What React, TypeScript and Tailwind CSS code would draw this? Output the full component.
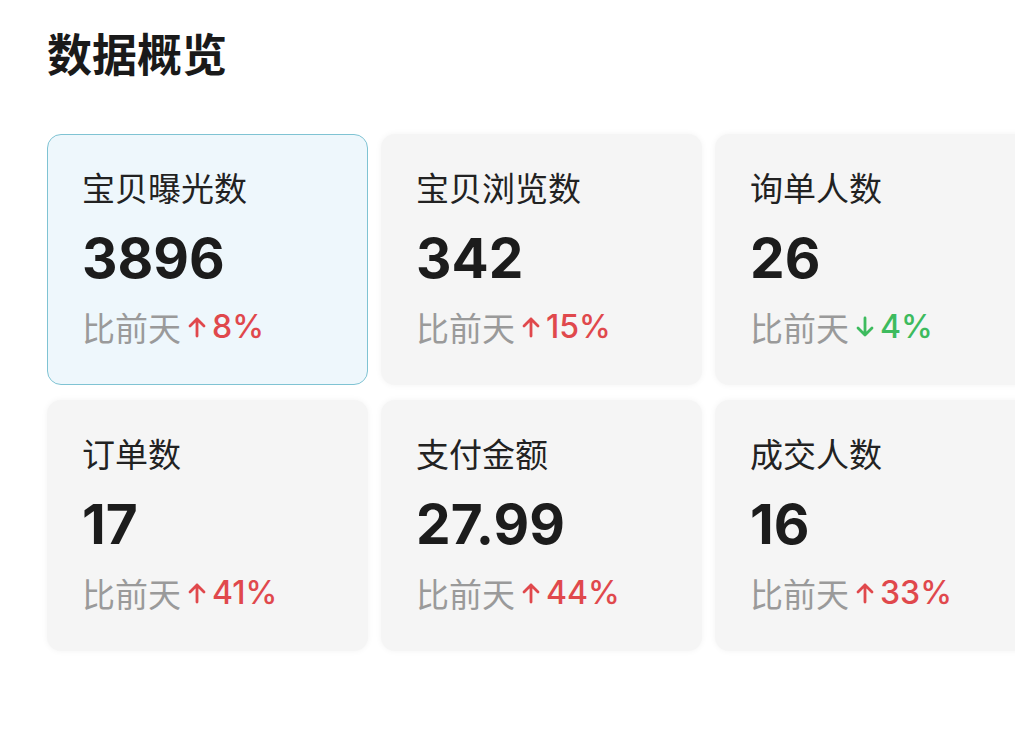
import React from 'react';

type Stat = {
  label: string;
  value: string;
  change: string;
  up: boolean;
  active?: boolean;
};

const stats: Stat[] = [
  { label: '宝贝曝光数', value: '3896', change: '8%', up: true, active: true },
  { label: '宝贝浏览数', value: '342', change: '15%', up: true },
  { label: '询单人数', value: '26', change: '4%', up: false },
  { label: '订单数', value: '17', change: '41%', up: true },
  { label: '支付金额', value: '27.99', change: '44%', up: true },
  { label: '成交人数', value: '16', change: '33%', up: true },
];

function Arrow({ up }: { up: boolean }) {
  return (
    <svg width="20" height="24" viewBox="0 0 20 24" fill="none" className="mr-[5px]">
      {up ? (
        <path d="M10 21V4M3 11l7-7 7 7" stroke="currentColor" strokeWidth="2.8" strokeLinecap="round" strokeLinejoin="round" />
      ) : (
        <path d="M10 3v17M3 13l7 7 7-7" stroke="currentColor" strokeWidth="2.8" strokeLinecap="round" strokeLinejoin="round" />
      )}
    </svg>
  );
}

function StatCard({ stat }: { stat: Stat }) {
  return (
    <div
      className={
        stat.active
          ? 'h-[251px] w-[321px] rounded-[14px] border-[1.5px] border-[#7fc3d3] bg-[#eef7fc] pl-[34px] pt-[33px]'
          : 'h-[251px] w-[321px] rounded-[14px] bg-[#f5f5f5] pl-[35px] pt-[34px] shadow-[0_0_6px_rgba(0,0,0,0.05)]'
      }
    >
      <div className="text-[33px] leading-[38px] text-[#222]">{stat.label}</div>
      <div className="mt-[24px] font-['Inter',sans-serif] text-[55px] font-bold leading-[56px] text-[#1c1c1c]">
        {stat.value}
      </div>
      <div className="mt-[22px] flex items-center text-[33px] leading-[38px] text-[#9a9a9a]">
        <span>比前天</span>
        <span className={stat.up ? 'ml-[6px] flex items-center text-[#e0484c]' : 'ml-[6px] flex items-center text-[#3dbb5e]'}>
          <Arrow up={stat.up} />
          <span className="font-['Inter',sans-serif] text-[32px] font-medium">{stat.change}</span>
        </span>
      </div>
    </div>
  );
}

export default function App() {
  return (
    <div className="h-[742px] w-[1015px] overflow-hidden bg-white pl-[47px] pt-[24px] font-['Noto_Sans_CJK_SC','Noto_Sans',sans-serif]">
      <h1 className="text-[45px] font-bold leading-[58px] text-[#1a1a1a]">数据概览</h1>
      <div className="mt-[52px] grid w-[990px] grid-cols-[321px_321px_321px] gap-x-[13px] gap-y-[15px]">
        {stats.map(s => (
          <StatCard key={s.label} stat={s} />
        ))}
      </div>
    </div>
  );
}
